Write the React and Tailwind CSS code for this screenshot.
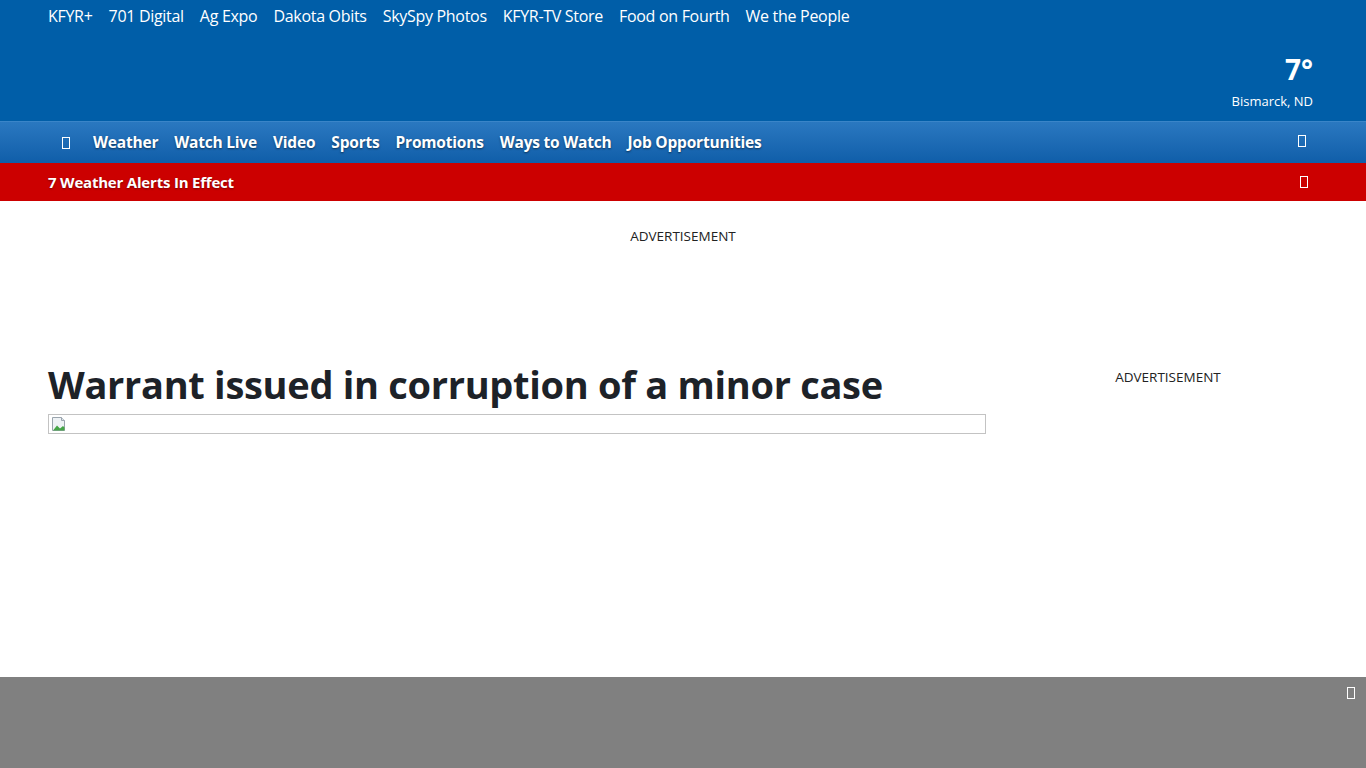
import React from 'react';

const TOP_LINKS = ['KFYR+', '701 Digital', 'Ag Expo', 'Dakota Obits', 'SkySpy Photos', 'KFYR-TV Store', 'Food on Fourth', 'We the People'];
const NAV_LINKS = ['Weather', 'Watch Live', 'Video', 'Sports', 'Promotions', 'Ways to Watch', 'Job Opportunities'];

// missing icon-font glyph, drawn as the empty box the browser shows
function Tofu({ className = '' }) {
  return <span className={`inline-block w-[8px] h-[12px] border border-current ${className}`} />;
}

function BrokenImage() {
  return (
    <svg width="16" height="16" viewBox="0 0 16 16" className="absolute left-[2px] top-[1px]">
      <path d="M1.5 1.5h9l3 3v10h-12z" fill="#eef2f5" stroke="#9aa4ad" />
      <path d="M10.5 1.5v3h3" fill="#dbe4ea" stroke="#9aa4ad" />
      <path d="M2 14.5l4-5 3 3 3-2.5 1.5 1.5v3z" fill="#45a447" />
    </svg>
  );
}

export default function App() {
  return (
    <div className="min-h-[768px] flex flex-col bg-white" style={{ fontFamily: '"Open Sans", "Noto Sans", sans-serif' }}>
      <header className="bg-[#005ea8] text-white h-[121px] px-[48px] flex flex-col">
        <nav className="flex gap-[16px] pt-[4px] text-[16px] leading-[24px] tracking-[-0.3px]">
          {TOP_LINKS.map(l => (
            <a key={l} className="whitespace-nowrap">{l}</a>
          ))}
        </nav>
        <div className="ml-auto mt-[26px] pr-[5px] flex flex-col items-end">
          <div className="text-[28px] font-bold leading-[30px]">7°</div>
          <div className="text-[13px] leading-[18px] mt-[8px]">Bismarck, ND</div>
        </div>
      </header>

      <div className="h-[42px] bg-gradient-to-b from-[#2a78c0] to-[#0f5ea9] border-t border-[#3a85c8] text-white flex items-center px-[62px]">
        <Tofu className="mr-[23px]" />
        <div className="flex gap-[16px] text-[15.5px] font-bold [text-shadow:0_1px_2px_rgba(0,0,0,0.5)] tracking-[-0.2px]">
          {NAV_LINKS.map(l => (
            <a key={l} className="whitespace-nowrap">{l}</a>
          ))}
        </div>
        <Tofu className="ml-auto mr-[-2px] mb-[3px]" />
      </div>

      <div className="h-[38px] bg-[#cc0000] text-white flex items-center pl-[48px] pr-[58px]">
        <span className="text-[15px] font-bold [text-shadow:0_1px_2px_rgba(0,0,0,0.4)] tracking-[-0.2px]">7 Weather Alerts In Effect</span>
        <Tofu className="ml-auto" />
      </div>

      <div className="h-[150px] flex justify-center pt-[26px]">
        <span className="text-[13.5px] text-[#222] leading-[18px]">ADVERTISEMENT</span>
      </div>

      <main className="flex px-[48px] flex-1">
        <article className="w-[938px]">
          <h1 className="mt-[7px] text-[38px] font-bold text-[#1d2228] leading-[52px] tracking-[-0.3px]">Warrant issued in corruption of a minor case</h1>
          <div className="relative h-[20px] mt-[4px] border border-[#c3c3c3]">
            <BrokenImage />
          </div>
        </article>
        <aside className="flex-1 flex justify-center pt-[17px] pl-[32px]">
          <span className="text-[13.5px] text-[#222] leading-[18px]">ADVERTISEMENT</span>
        </aside>
      </main>

      <footer className="h-[91px] bg-[#808080] flex justify-end pt-[10px] pr-[11px] text-white">
        <Tofu />
      </footer>
    </div>
  );
}
